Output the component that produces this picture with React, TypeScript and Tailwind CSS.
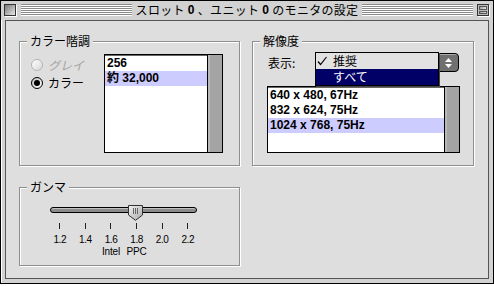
import React from 'react'

const jp = "font-['Noto_Sans_CJK_JP','Noto_Sans',sans-serif]"
const latin = "font-['Liberation_Sans','Noto_Sans_CJK_JP',sans-serif]"

function Stripes() {
  return (
    <div className="flex-1 h-[12px] bg-[repeating-linear-gradient(to_bottom,#8a8a8a_0px,#8a8a8a_1px,#ffffff_1px,#ffffff_2px)]" />
  )
}

function TitleBar() {
  return (
    <div className="h-[19px] flex items-start pt-[3px] pl-[3px] pr-[4px] bg-[#d2d2d2]">
      {/* close box */}
      <div className="w-[12px] h-[12px] border border-[#333] bg-[linear-gradient(135deg,#777,#e8e8e8)] shadow-[1px_1px_0_#fff]" />
      <div className="w-[5px]" />
      <Stripes />
      <div className={`px-[4px] h-[12px] flex items-center text-[12px] leading-[12px] tracking-[0.3px] text-black whitespace-nowrap ${jp}`}>
        スロット <span className={`font-bold mx-[3px] ${latin}`}>0</span>、ユニット <span className={`font-bold mx-[3px] ${latin}`}>0</span> のモニタの設定
      </div>
      <Stripes />
      <div className="w-[4px]" />
      {/* collapse box */}
      <div className="w-[12px] h-[12px] border border-[#333] bg-[#bbb] flex flex-col p-[1px] gap-[1px] shadow-[1px_1px_0_#fff]">
        <div className="flex-1 border border-[#555] bg-[linear-gradient(135deg,#999,#e8e8e8)]" />
        <div className="flex-1 border border-[#555] bg-[linear-gradient(135deg,#999,#e8e8e8)]" />
      </div>
    </div>
  )
}

function Group({ label, className, children }: { label: string; className: string; children?: React.ReactNode }) {
  return (
    <div className={`relative border border-[#8e8e8e] shadow-[1px_1px_0_#fff,inset_1px_1px_0_#fff] ${className}`}>
      <span className={`absolute -top-[8px] left-[7px] px-[3px] bg-[#dedede] text-[12px] leading-[14px] text-black ${jp}`}>
        {label}
      </span>
      {children}
    </div>
  )
}

function Radio({ checked, disabled, label }: { checked?: boolean; disabled?: boolean; label: string }) {
  return (
    <div className="flex items-center h-[12px] gap-[5px]">
      <div
        className={`w-[12px] h-[12px] rounded-full border flex items-center justify-center ${
          disabled
            ? 'border-[#b4b4b4] bg-[linear-gradient(135deg,#ffffff,#d8d8d8)]'
            : 'border-black bg-[linear-gradient(135deg,#bcbcbc,#ffffff)]'
        }`}
      >
        {checked && <div className="w-[6px] h-[6px] rounded-full bg-black" />}
      </div>
      <span className={`text-[12px] leading-[12px] ${disabled ? 'text-[#a3a3a3] italic' : 'text-black'} ${jp}`}>{label}</span>
    </div>
  )
}

function ListBox({ items, selected, className }: { items: string[]; selected: number; className: string }) {
  return (
    <div className={`flex border border-black bg-white shadow-[inset_0_1px_0_#666] ${className}`}>
      <div className="flex-1 pt-[1px]">
        {items.map((it, i) => (
          <div
            key={it}
            className={`h-[15px] pl-[2px] text-[12px] leading-[15px] font-bold text-black whitespace-nowrap ${latin} ${
              i === selected ? 'bg-[#ccccff]' : ''
            }`}
          >
            {it}
          </div>
        ))}
      </div>
      <div className="w-[15px] border-l border-black bg-[#a4a4a4] shadow-[inset_2px_0_0_#b8b8b8]" />
    </div>
  )
}

function PopupMenu() {
  return (
    <div className="relative w-[145px] h-[19px]">
      <div className={`absolute left-[1px] -top-[1px] w-[124px] border border-black bg-[#e2e2e2] shadow-[1px_1px_0_#444] z-10 text-[12px] ${jp}`}>
        <div className="h-[16px] flex items-center">
          <svg width="17" height="10" viewBox="0 0 17 10" className="shrink-0">
            <path d="M2 5.5 L4.5 8.5 L10.5 1" fill="none" stroke="#000" strokeWidth="1.2" />
          </svg>
          <span className="leading-[16px] text-black">推奨</span>
        </div>
        <div className="h-[16px] pl-[17px] leading-[16px] bg-[#000066] text-white">すべて</div>
      </div>
      <div className="absolute right-0 top-0 w-[21px] h-[19px] border border-black rounded-r-[4px] bg-[#707070] shadow-[inset_1px_1px_0_#aaa] flex items-center justify-center">
        <svg width="9" height="12" viewBox="0 0 9 12">
          <path d="M4.5 1 L8 5 L1 5 Z" fill="#fff" />
          <path d="M1 7 L8 7 L4.5 11 Z" fill="#fff" />
        </svg>
      </div>
    </div>
  )
}

function GammaSlider() {
  const ticks = ['1.2', '1.4', '1.6', '1.8', '2.0', '2.2']
  return (
    <div className="pl-[30px] pt-[17px]">
      <div className="relative w-[147px] h-[16px]">
        <div className="absolute left-0 right-0 top-[2px] h-[6px] rounded-full border border-black bg-[#8c8c8c] shadow-[inset_0_1px_0_#c0c0c0]" />
        <svg width="15" height="16" viewBox="0 0 15 16" className="absolute left-[78px] top-0">
          <defs>
            <linearGradient id="th" x1="0" y1="0" x2="1" y2="1">
              <stop offset="0" stopColor="#f2f2f2" />
              <stop offset="1" stopColor="#a8a8a8" />
            </linearGradient>
          </defs>
          <path d="M0.5 0.5 H14.5 V10 L7.5 15.3 L0.5 10 Z" fill="url(#th)" stroke="#333" />
          <path d="M5.5 3 V9 M7.5 3 V9 M9.5 3 V9" stroke="#666" />
        </svg>
      </div>
      <div className="flex -ml-[3px] mt-[2px]">
        {ticks.map((t, i) => (
          <div key={t} className="w-[25.6px] flex flex-col items-center">
            <div className="w-px h-[6px] bg-[#222]" />
            <div className={`mt-[5px] text-[10px] leading-[12px] tracking-[-0.4px] text-black ${latin}`}>{t}</div>
            <div className={`text-[10px] leading-[12px] tracking-[-0.2px] text-black h-[12px] ${latin}`}>
              {i === 2 ? 'Intel' : i === 3 ? 'PPC' : ''}
            </div>
          </div>
        ))}
      </div>
    </div>
  )
}

export default function App() {
  return (
    <div className="w-[494px] h-[286px] bg-white">
      <div className="w-[494px] h-[284px] border border-black bg-[#d2d2d2] flex flex-col shadow-[inset_1px_1px_0_#fff]">
        <TitleBar />
        <div className="mx-[4px] mb-[4px] flex-1 border border-[#555] bg-[#dedede] pl-[13px] pt-[20px]">
          <div className="flex gap-[12px]">
            <Group label="カラー階調" className="w-[221px] h-[125px]">
              <div className="flex pl-[11px] pt-[12px]">
                <div className="w-[73px] pt-[5px] flex flex-col gap-[6px]">
                  <Radio disabled label="グレイ" />
                  <Radio checked label="カラー" />
                </div>
                <ListBox items={['256', '約 32,000']} selected={1} className="w-[119px] h-[99px]" />
              </div>
            </Group>
            <Group label="解像度" className="w-[222px] h-[125px]">
              <div className="pl-[14px] pt-[11px]">
                <div className="flex items-center h-[19px]">
                  <span className={`w-[47px] pl-[1px] text-[12px] leading-[14px] text-black ${jp}`}>表示:</span>
                  <PopupMenu />
                </div>
                <ListBox
                  items={['640 x 480, 67Hz', '832 x 624, 75Hz', '1024 x 768, 75Hz']}
                  selected={2}
                  className="mt-[14px] w-[193px] h-[67px]"
                />
              </div>
            </Group>
          </div>
          <Group label="ガンマ" className="mt-[21px] w-[221px] h-[79px]">
            <GammaSlider />
          </Group>
        </div>
      </div>
    </div>
  )
}
